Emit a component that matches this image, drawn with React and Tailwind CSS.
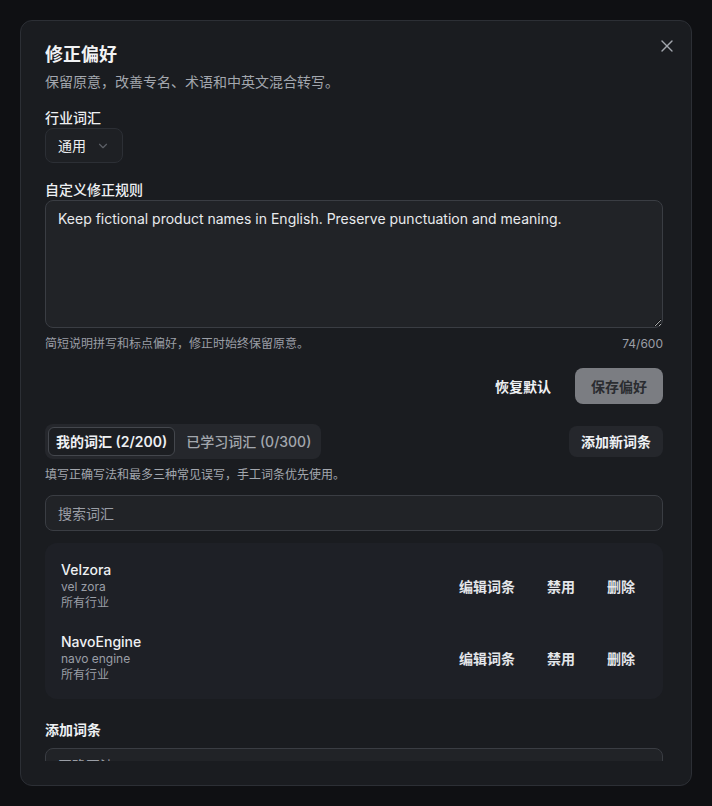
import React from "react";

const FONT = { fontFamily: 'Inter, "Noto Sans CJK SC", "Noto Sans", sans-serif' };

function XIcon() {
  return (
    <svg width="20" height="20" viewBox="0 0 24 24" fill="none" stroke="currentColor" strokeWidth="1.6" strokeLinecap="round" strokeLinejoin="round">
      <path d="M18 6 6 18" />
      <path d="m6 6 12 12" />
    </svg>
  );
}

function Chevron() {
  return (
    <svg width="14" height="14" viewBox="0 0 24 24" fill="none" stroke="currentColor" strokeWidth="2" strokeLinecap="round" strokeLinejoin="round">
      <path d="m6 9 6 6 6-6" />
    </svg>
  );
}

function Entry({ name, alias }) {
  return (
    <div className="flex items-center">
      <div className="flex-1 flex flex-col">
        <div className="text-[14px] leading-[18px] font-medium text-[#eef0f3]">{name}</div>
        <div className="text-[12px] leading-4 text-[#9a9ea6]">{alias}</div>
        <div className="text-[12px] leading-4 text-[#9a9ea6]">所有行业</div>
      </div>
      <div className="flex items-center gap-2 text-[14px] font-semibold text-[#e4e6ea]">
        <button className="px-3 h-8">编辑词条</button>
        <button className="px-3 h-8">禁用</button>
        <button className="px-3 h-8">删除</button>
      </div>
    </div>
  );
}

export default function App() {
  return (
    <div className="min-h-screen w-full bg-[#0f1013] pt-5 pl-5" style={FONT}>
      <div className="relative w-[672px] h-[766px] rounded-xl border border-[#2c2f35] bg-[#1a1c20] pl-6 pr-[28px] pt-5 pb-6 flex flex-col">
        <button className="absolute top-[15px] right-[14px] text-[#a3a7ae]">
          <XIcon />
        </button>
        <div className="flex-1 overflow-hidden">
          <h2 className="text-[18px] leading-7 font-semibold text-[#f1f2f4]">修正偏好</h2>
          <p className="mt-[3px] text-[14px] leading-5 text-[#a3a7ae]">保留原意，改善专名、术语和中英文混合转写。</p>

          <div className="mt-4 text-[14px] leading-5 font-medium text-[#eef0f3]">行业词汇</div>
          <div className="flex">
            <button className="h-[35px] pl-3 pr-3 rounded-lg border border-[#2c2f35] bg-[#1e2024] flex items-center gap-2.5 text-[14px] text-[#eef0f3]">
              <span>通用</span>
              <span className="text-[#5d6067]"><Chevron /></span>
            </button>
          </div>

          <div className="mt-[17px] text-[14px] leading-5 font-medium text-[#eef0f3]">自定义修正规则</div>
          <textarea
            readOnly
            className="block h-[128px] w-full resize-y rounded-lg border border-[#3a3d43] bg-[#212327] px-3 py-2 text-[14px] leading-5 text-[#e8eaed] outline-none"
            value="Keep fictional product names in English. Preserve punctuation and meaning."
          />
          <div className="mt-2 flex justify-between text-[12px] leading-4 text-[#9a9ea6]">
            <span>简短说明拼写和标点偏好，修正时始终保留原意。</span>
            <span>74/600</span>
          </div>

          <div className="mt-4 flex justify-end gap-2">
            <button className="h-9 px-4 rounded-lg text-[14px] font-semibold text-[#eef0f3]">恢复默认</button>
            <button className="h-9 px-4 rounded-lg bg-[#7b7d82] text-[14px] font-semibold text-[#2a2c30]">保存偏好</button>
          </div>

          <div className="mt-5 flex items-center justify-between">
            <div className="flex items-center h-[35px] rounded-lg bg-[#25272c] p-[3px] gap-1">
              <button className="h-[29px] px-[7px] rounded-md border border-[#44474d] bg-[#1c1e22] text-[14px] font-semibold text-[#eef0f3]">我的词汇 (2/200)</button>
              <button className="h-[29px] px-[7px] rounded-md text-[14px] font-medium text-[#a3a7ae]">已学习词汇 (0/300)</button>
            </div>
            <button className="h-[31px] px-3 rounded-lg bg-[#25272c] text-[14px] font-semibold text-[#eef0f3]">添加新词条</button>
          </div>

          <p className="mt-2 text-[12px] leading-4 text-[#a3a7ae]">填写正确写法和最多三种常见误写，手工词条优先使用。</p>

          <div className="mt-3 h-[36px] rounded-lg border border-[#3a3d43] bg-[#212327] px-3 flex items-center text-[14px] text-[#9a9ea6]">搜索词汇</div>

          <div className="mt-3 rounded-xl bg-[#1e2026] px-4 pt-[18px] pb-[16px] flex flex-col gap-[22px]">
            <Entry name="Velzora" alias="vel zora" />
            <Entry name="NavoEngine" alias="navo engine" />
          </div>

          <div className="mt-[21px] text-[14px] leading-5 font-semibold text-[#eef0f3]">添加词条</div>
          <div className="mt-2 h-[36px] rounded-lg border border-[#3a3d43] bg-[#212327] px-3 flex items-center text-[14px] leading-5 text-[#9a9ea6]">正确写法</div>
        </div>
      </div>
    </div>
  );
}
